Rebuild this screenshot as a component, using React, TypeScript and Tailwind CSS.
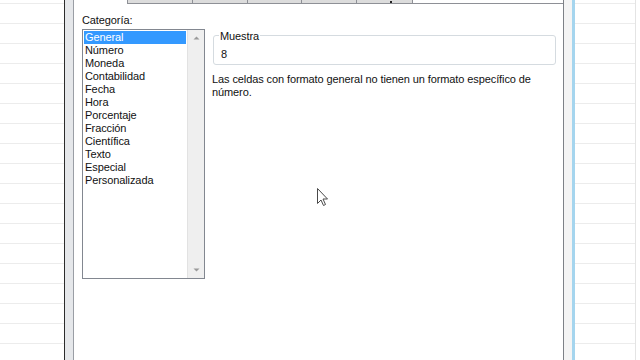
import React from "react";

const items = [
  "General",
  "Número",
  "Moneda",
  "Contabilidad",
  "Fecha",
  "Hora",
  "Porcentaje",
  "Fracción",
  "Científica",
  "Texto",
  "Especial",
  "Personalizada",
];

function Rows({ right }: { right?: boolean }) {
  const rows = Array.from({ length: 18 });
  return (
    <div
      className={
        right
          ? "w-[65px] h-full flex flex-col pr-[4px]"
          : "w-[64px] h-full flex flex-col"
      }
    >
      <div className={right ? "h-full flex flex-col border-r border-[#e4e4e4]" : "h-full flex flex-col"}>
        <div className="h-[4px] shrink-0 border-b border-[#ececec]" />
        {rows.map((_, i) => (
          <div key={i} className="h-[20px] shrink-0 border-b border-[#ececec]" />
        ))}
      </div>
    </div>
  );
}

export default function App() {
  return (
    <div className="w-[640px] h-[360px] flex bg-white overflow-hidden relative font-['Liberation_Sans',Arial,sans-serif] text-[11px] leading-[13px] tracking-[-0.1px] text-[#111]">
      <Rows />
      {/* dialog */}
      <div className="w-[511px] h-full flex shrink-0">
        <div className="w-px bg-[#2c2c2c]" />
        <div className="w-[8px] bg-[#e5e7ea]" />
        <div className="w-[491px] flex flex-col border-l border-r border-l-[#9a9ea5] border-r-[#7d8187] bg-white">
          {/* tab strip */}
          <div className="h-[4px] flex shrink-0">
            <div className="w-[54px] bg-white border-r border-[#8e9096]" />
            <div className="w-[65px] bg-[#dcdcdc] border-r border-b border-[#8e9096]" />
            <div className="w-[55px] bg-[#dcdcdc] border-r border-b border-[#8e9096]" />
            <div className="w-[54px] bg-[#dcdcdc] border-r border-b border-[#8e9096]" />
            <div className="w-[55px] bg-[#dcdcdc] border-r border-b border-[#8e9096]" />
            <div className="w-[56px] bg-[#dcdcdc] border-r border-b border-[#8e9096] pl-[33px] pt-[1px]">
              <div className="w-[2px] h-[2px] bg-[#222]" />
            </div>
            <div className="flex-1 border-b border-[#8e9096]" />
          </div>
          {/* content */}
          <div className="flex-1 flex pl-[8px]">
            <div className="flex flex-col">
              <div className="mt-[10px] h-[13px]">Categoría:</div>
              <div className="mt-[2px] w-[123px] h-[250px] border border-[#828790] flex">
                <div className="w-[104px] p-px flex flex-col">
                  {items.map((it, i) => (
                    <div
                      key={it}
                      className={
                        i === 0
                          ? "h-[13px] pl-px bg-[#3399ff] text-white whitespace-nowrap"
                          : "h-[13px] pl-px whitespace-nowrap"
                      }
                    >
                      {it}
                    </div>
                  ))}
                </div>
                <div className="w-[17px] bg-[#efefef] border-l border-[#e2e2e2] flex flex-col justify-between py-[6px] items-center">
                  <svg width="7" height="4" viewBox="0 0 7 4">
                    <path d="M0.5 3.5 L3.5 0.5 L6.5 3.5 Z" fill="#9a9a9a" />
                  </svg>
                  <svg width="7" height="4" viewBox="0 0 7 4">
                    <path d="M0.5 0.5 L3.5 3.5 L6.5 0.5 Z" fill="#9a9a9a" />
                  </svg>
                </div>
              </div>
            </div>
            <div className="ml-[7px] w-[344px] flex flex-col">
              <div className="mt-[31px] ml-px h-[30px] border border-[#d5dbe0] rounded-[3px] relative pt-[12px] pl-[7px]">
                <div className="absolute left-[5px] top-[-6px] bg-white px-px h-[13px]">Muestra</div>
                <div className="h-[13px]">8</div>
              </div>
              <div className="mt-[8px] whitespace-nowrap">
                <div className="h-[13px]">Las celdas con formato general no tienen un formato específico de</div>
                <div className="h-[13px]">número.</div>
              </div>
            </div>
          </div>
        </div>
        <div className="w-[8px] bg-[#f4f4f4]" />
        <div className="w-[3px] bg-[#a5d5ee]" />
      </div>
      <Rows right />
      {/* mouse cursor */}
      <svg
        className="absolute left-[316px] top-[187px]"
        width="13"
        height="20"
        viewBox="0 0 13 20"
      >
        <path
          d="M1.5 1.5 L1.5 16.5 L5 13 L7.5 18.5 L9.5 17.5 L7 12 L11.5 12 Z"
          fill="#ffffff"
          stroke="#4a4a4a"
          strokeWidth="1"
          strokeLinejoin="miter"
        />
      </svg>
    </div>
  );
}
